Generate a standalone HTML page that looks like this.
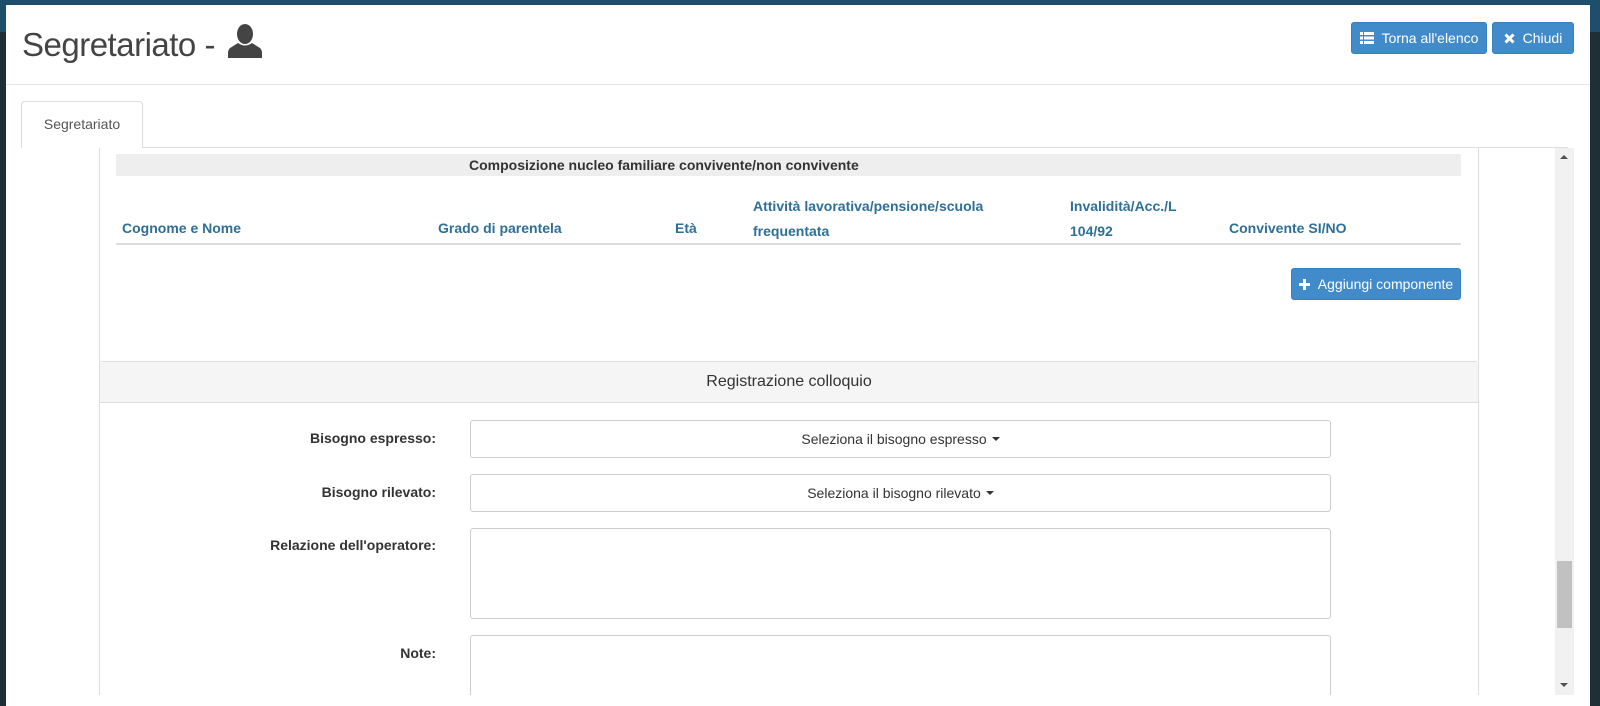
<!DOCTYPE html>
<html><head><meta charset="utf-8"><style>
*{box-sizing:border-box;margin:0;padding:0}
html,body{width:1600px;height:706px;overflow:hidden}
body{background:#1f2f36;font-family:"Liberation Sans",sans-serif;position:relative;font-size:14px;color:#333}
.topbar{position:absolute;left:0;top:0;width:1600px;height:32px;background:#1d4f6b}
.modal{position:absolute;left:6px;top:5px;width:1584px;height:701px;background:#fff}
.abs{position:absolute}
.btn{position:absolute;background:#428bca;color:#fff;border-radius:3px;font-size:14px;display:flex;align-items:center;justify-content:center;gap:8px;border:1px solid #3a7fbd}
.th{position:absolute;color:#2e6f96;font-weight:bold;font-size:14px;line-height:25px}
.lbl{position:absolute;font-weight:bold;font-size:14px;text-align:right;width:300px;left:136px}
.sel{position:absolute;left:470px;width:861px;border:1px solid #ccc;border-radius:3px;background:#fff;display:flex;align-items:center;justify-content:center;font-size:14px}
.car{display:inline-block;border-left:4px solid transparent;border-right:4px solid transparent;border-top:4px solid #333;margin-left:5px;vertical-align:middle}
</style></head><body>
<div class="topbar"></div>
<div class="modal"></div>
<div class="abs" style="left:22px;top:25px;font-size:33px;color:#444;line-height:40px;letter-spacing:-0.5px">Segretariato -</div>
<svg class="abs" style="left:227px;top:24px" width="36" height="34" viewBox="0 0 36 34"><ellipse cx="18" cy="10" rx="8" ry="10" fill="#444"/><path d="M11 19 Q18 24 25 19 L33 24 Q35 26 35 29 L35 34 L1 34 L1 29 Q1 26 3 24 Z" fill="#444"/></svg>
<div class="btn" style="left:1351px;top:22px;width:136px;height:32px"><svg width="14" height="12" viewBox="0 0 14 12"><rect x="0" y="0" width="3" height="3" fill="#fff"/><rect x="4" y="0" width="10" height="3" fill="#fff"/><rect x="0" y="4.5" width="3" height="3" fill="#fff"/><rect x="4" y="4.5" width="10" height="3" fill="#fff"/><rect x="0" y="9" width="3" height="3" fill="#fff"/><rect x="4" y="9" width="10" height="3" fill="#fff"/></svg>Torna all'elenco</div>
<div class="btn" style="left:1492px;top:22px;width:82px;height:32px"><svg width="11" height="11" viewBox="0 0 11 11"><path d="M1.5 1.5L9.5 9.5M9.5 1.5L1.5 9.5" stroke="#fff" stroke-width="3"/></svg>Chiudi</div>
<div class="abs" style="left:6px;top:84px;width:1584px;height:1px;background:#e5e5e5"></div>
<div class="abs" style="left:21px;top:147px;width:1547px;height:1px;background:#ddd"></div>
<div class="abs" style="left:21px;top:101px;width:122px;height:47px;border:1px solid #ddd;border-bottom:none;border-radius:4px 4px 0 0;background:#fff;text-align:center;line-height:44px;font-size:14px;color:#555">Segretariato</div>
<div class="abs" style="left:99px;top:148px;width:1px;height:547px;background:#ddd"></div>
<div class="abs" style="left:1478px;top:148px;width:1px;height:547px;background:#ddd"></div>
<div class="abs" style="left:116px;top:154px;width:1345px;height:22px;background:#eee"></div>
<div class="abs" style="left:469px;top:154px;font-weight:bold;line-height:22px;font-size:14px">Composizione nucleo familiare convivente/non convivente</div>
<div class="th" style="left:122px;top:216px">Cognome e Nome</div>
<div class="th" style="left:438px;top:216px">Grado di parentela</div>
<div class="th" style="left:675px;top:216px">Età</div>
<div class="th" style="left:753px;top:194px">Attività lavorativa/pensione/scuola<br>frequentata</div>
<div class="th" style="left:1070px;top:194px">Invalidità/Acc./L<br>104/92</div>
<div class="th" style="left:1229px;top:216px">Convivente SI/NO</div>
<div class="abs" style="left:116px;top:243px;width:1345px;height:2px;background:#ddd"></div>
<div class="btn" style="left:1291px;top:268px;width:170px;height:32px"><svg width="11" height="11" viewBox="0 0 11 11"><path d="M5.5 0V11M0 5.5H11" stroke="#fff" stroke-width="3"/></svg>Aggiungi componente</div>
<div class="abs" style="left:99px;top:361px;width:1380px;height:334px;border:1px solid #ddd;border-bottom:none;border-radius:4px 4px 0 0"></div>
<div class="abs" style="left:100px;top:362px;width:1378px;height:41px;background:#f5f5f5;border-bottom:1px solid #ddd;text-align:center;line-height:40px;font-size:16px;color:#333">Registrazione colloquio</div>
<div class="lbl" style="top:430px">Bisogno espresso:</div>
<div class="sel" style="top:420px;height:38px">Seleziona il bisogno espresso<span class="car"></span></div>
<div class="lbl" style="top:484px">Bisogno rilevato:</div>
<div class="sel" style="top:474px;height:38px">Seleziona il bisogno rilevato<span class="car"></span></div>
<div class="lbl" style="top:537px">Relazione dell'operatore:</div>
<div class="sel" style="top:528px;height:91px"></div>
<div class="lbl" style="top:645px">Note:</div>
<div class="sel" style="top:635px;height:60px;border-bottom:none;border-radius:3px 3px 0 0"></div>
<div class="abs" style="left:1555px;top:148px;width:19px;height:547px;background:#f1f1f1"></div>
<div class="abs" style="left:1557px;top:561px;width:15px;height:67px;background:#c1c1c1"></div>
<div class="abs" style="left:1560px;top:155px;border-left:4px solid transparent;border-right:4px solid transparent;border-bottom:4px solid #505050"></div>
<div class="abs" style="left:1560px;top:683px;border-left:4px solid transparent;border-right:4px solid transparent;border-top:4px solid #505050"></div>
</body></html>
